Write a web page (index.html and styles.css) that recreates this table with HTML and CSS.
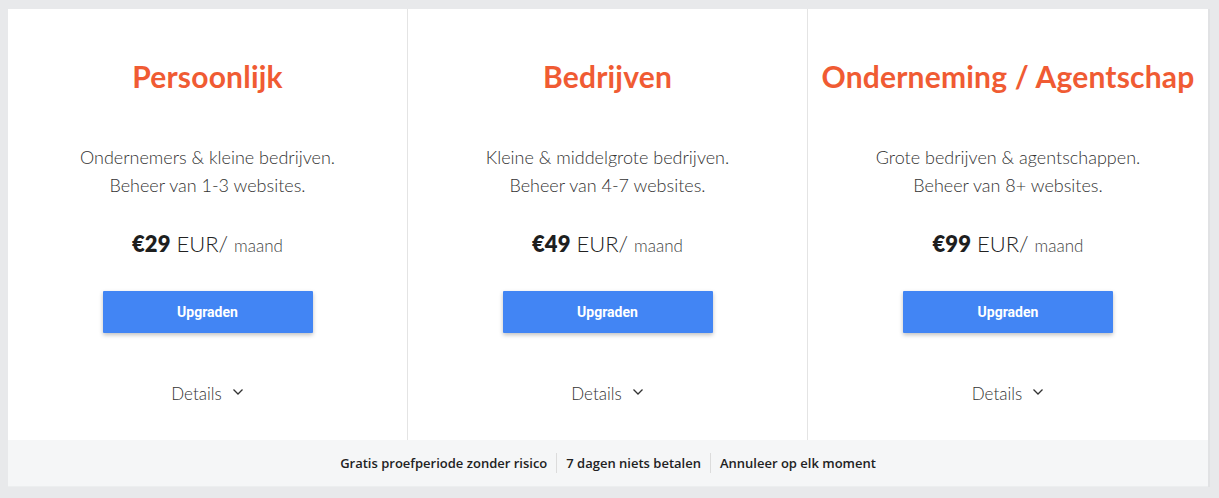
FILE: index.html
```html
<!DOCTYPE html>
<html lang="nl">
<head>
<meta charset="utf-8">
<link rel="stylesheet" href="styles.css">
</head>
<body>
<div class="frame">
  <div class="plans">
    <div class="plan">
      <h2 class="plan-title">Persoonlijk</h2>
      <p class="plan-desc">Ondernemers &amp; kleine bedrijven.<br>Beheer van 1-3 websites.</p>
      <div class="price"><strong>€29</strong> <span class="cur">EUR/</span> <span class="per">maand</span></div>
      <button class="btn">Upgraden</button>
      <div class="details">Details <svg class="chev" width="12" height="8" viewBox="0 0 12 8"><path d="M1.5 1.5 L6 6 L10.5 1.5" fill="none" stroke="#333" stroke-width="1.3"/></svg></div>
    </div>
    <div class="plan">
      <h2 class="plan-title">Bedrijven</h2>
      <p class="plan-desc">Kleine &amp; middelgrote bedrijven.<br>Beheer van 4-7 websites.</p>
      <div class="price"><strong>€49</strong> <span class="cur">EUR/</span> <span class="per">maand</span></div>
      <button class="btn">Upgraden</button>
      <div class="details">Details <svg class="chev" width="12" height="8" viewBox="0 0 12 8"><path d="M1.5 1.5 L6 6 L10.5 1.5" fill="none" stroke="#333" stroke-width="1.3"/></svg></div>
    </div>
    <div class="plan">
      <h2 class="plan-title">Onderneming / Agentschap</h2>
      <p class="plan-desc">Grote bedrijven &amp; agentschappen.<br>Beheer van 8+ websites.</p>
      <div class="price"><strong>€99</strong> <span class="cur">EUR/</span> <span class="per">maand</span></div>
      <button class="btn">Upgraden</button>
      <div class="details">Details <svg class="chev" width="12" height="8" viewBox="0 0 12 8"><path d="M1.5 1.5 L6 6 L10.5 1.5" fill="none" stroke="#333" stroke-width="1.3"/></svg></div>
    </div>
  </div>
  <div class="perks">
    <span class="perk">Gratis proefperiode zonder risico</span>
    <span class="perk">7 dagen niets betalen</span>
    <span class="perk">Annuleer op elk moment</span>
  </div>
</div>
</body>
</html>
```
FILE: styles.css
```css
* { box-sizing: border-box; }
html, body { margin: 0; padding: 0; }
body {
  background: #e8e9eb;
  width: 1219px;
  height: 498px;
  overflow: hidden;
  font-family: "Lato", "Noto Sans", sans-serif;
  padding: 9px 11px 0 8px;
}
.frame {
  width: 1200px;
  background: #fff;
  box-shadow: 2px 0 0 #e1e2e4;
}
.plans {
  display: grid;
  grid-template-columns: 400px 400px 400px;
}
.plan {
  display: flex;
  flex-direction: column;
  align-items: center;
  height: 431px;
  padding-top: 49px;
  border-right: 1px solid #e4e4e4;
}
.plan:last-child { border-right: none; }
.plan-title {
  margin: 0;
  font-size: 30px;
  line-height: 36px;
  font-weight: 700;
  color: #f05b33;
  letter-spacing: 0.2px;
}
.plan-desc {
  margin: 49px 0 0;
  font-size: 18px;
  line-height: 28px;
  font-weight: 300;
  color: #333;
  text-align: center;
}
.price {
  margin-top: 30px;
  font-size: 22px;
  line-height: 30px;
  color: #222;
  font-weight: 300;
}
.price strong { font-weight: 800; color: #1e1e1e; }
.price .cur { font-weight: 300; }
.price .per { font-size: 17px; color: #444; font-weight: 300; }
.btn {
  margin-top: 30px;
  width: 210px;
  height: 42px;
  border: none;
  border-radius: 1px;
  background: #4285f4;
  color: #fff;
  font-family: "Roboto", sans-serif;
  font-weight: 700;
  font-size: 14px;
  box-shadow: 0 2px 4px rgba(0,0,0,0.25);
}
.details {
  margin-top: 49px;
  font-size: 17px;
  line-height: 24px;
  font-weight: 300;
  color: #333;
  display: flex;
  align-items: center;
  gap: 10px;
}
.chev { margin-top: -4px; }
.perks {
  height: 47px;
  background: #f5f6f7;
  display: flex;
  justify-content: center;
  align-items: center;
  font-family: "Open Sans", "Noto Sans", sans-serif;
  font-weight: 600;
  font-size: 13px;
  color: #222;
  border-bottom: 1px solid #eceeef;
}
.perk { padding: 0 9px; line-height: 20px; }
.perk + .perk { border-left: 1px solid #dcdcdc; }
```
